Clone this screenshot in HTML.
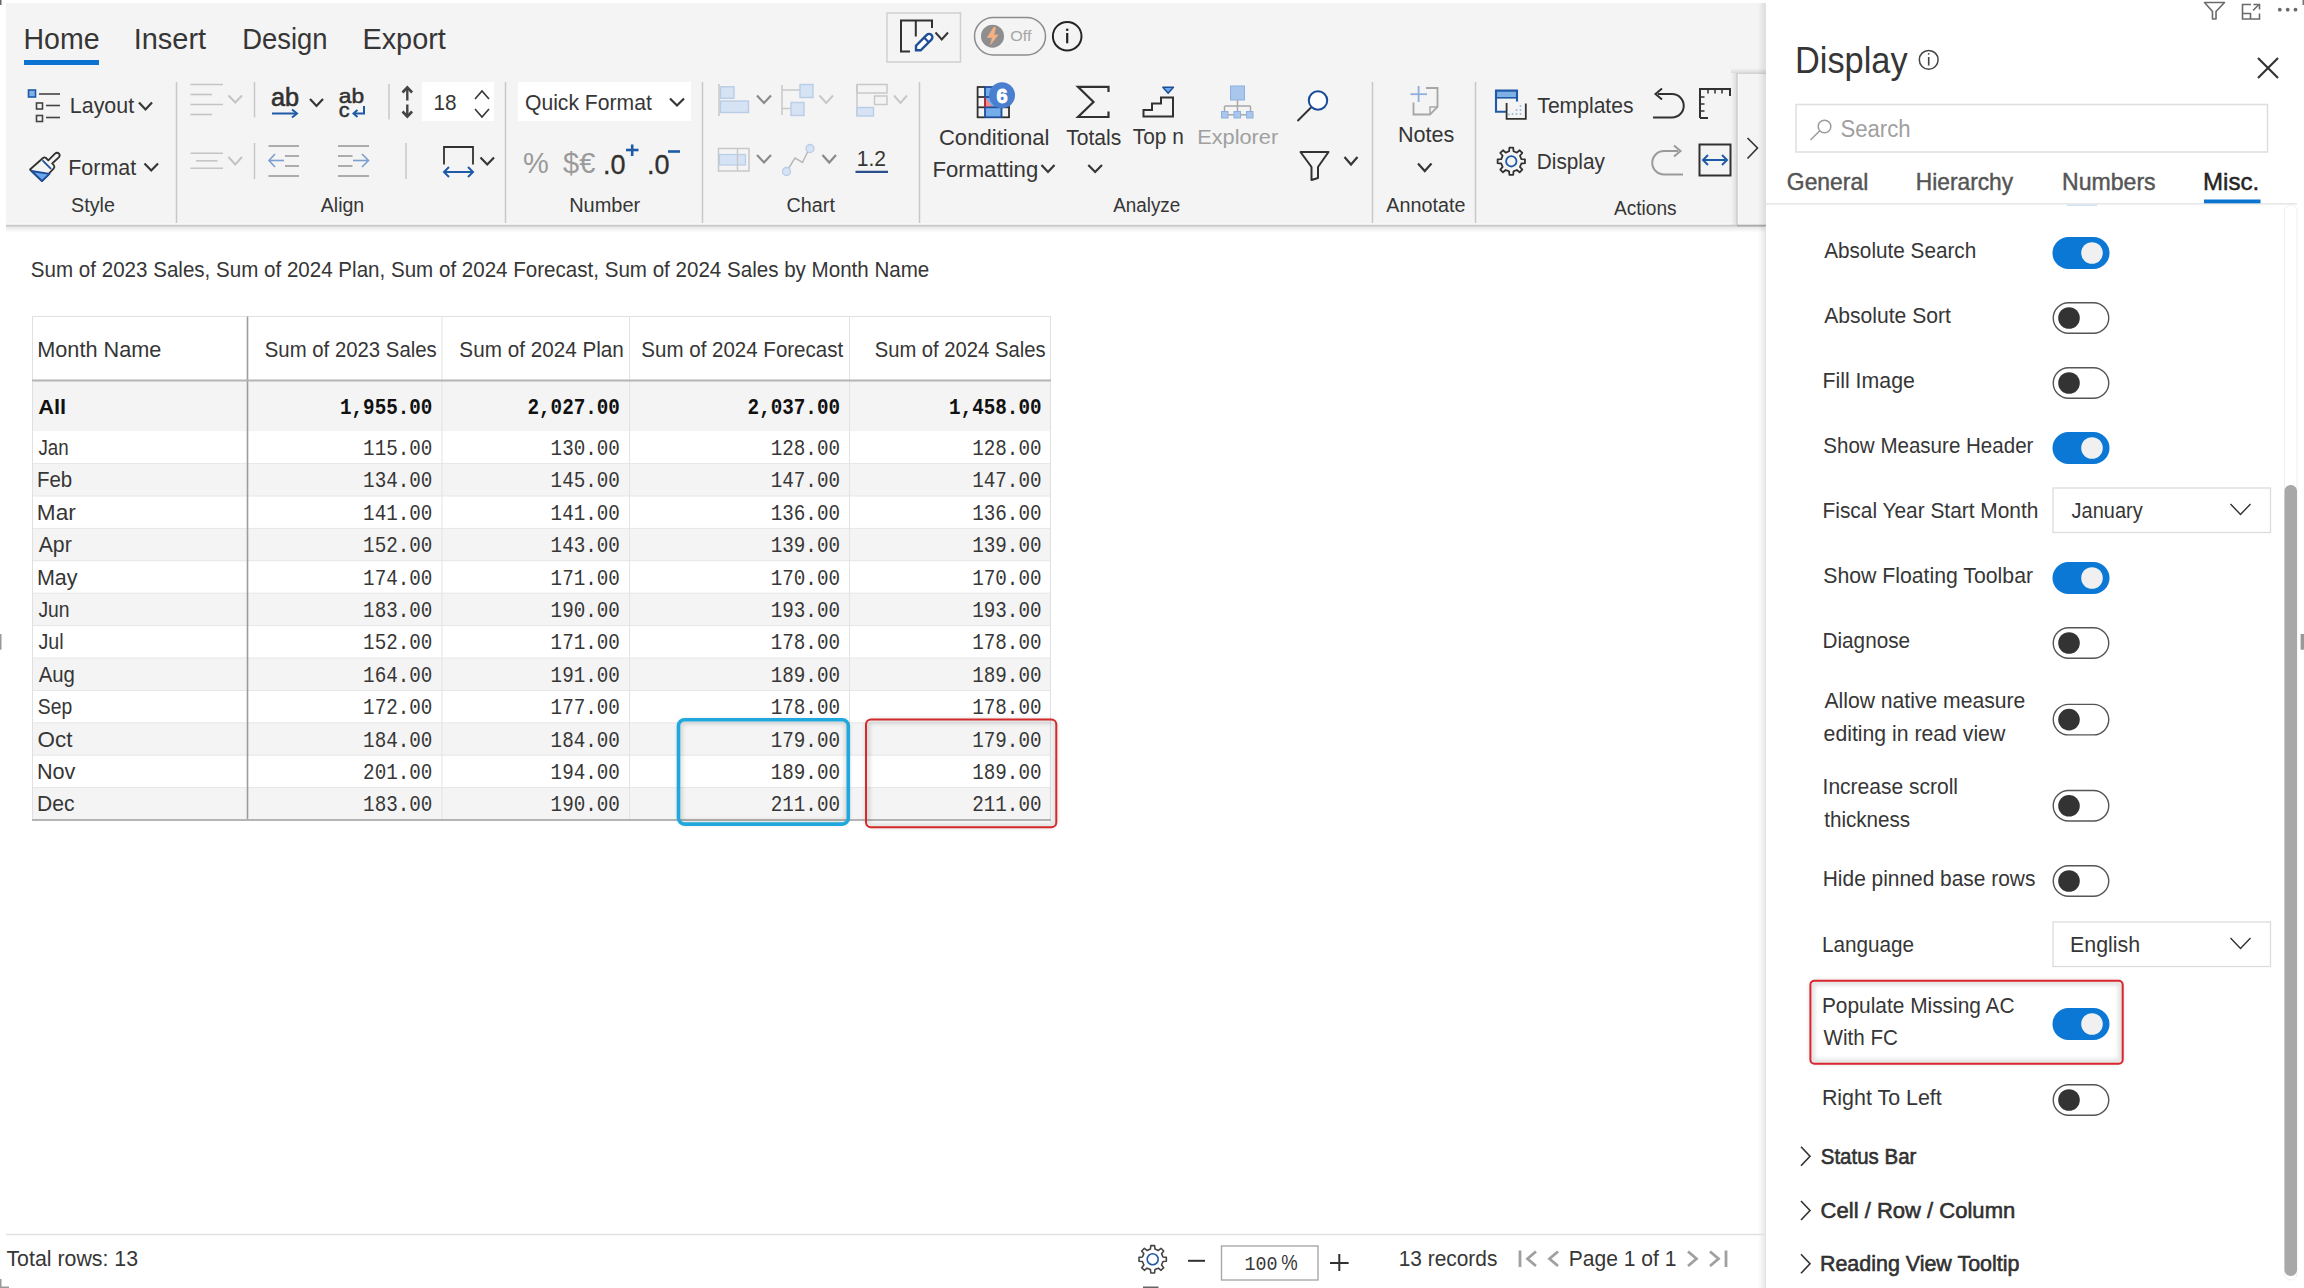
<!DOCTYPE html>
<html><head><meta charset="utf-8"><style>
html,body{margin:0;padding:0;background:#fff;width:2304px;height:1288px;overflow:hidden}
svg{position:absolute;left:0;top:0;display:block}
text{white-space:pre}
</style></head><body>
<svg width="2304" height="1288" viewBox="0 0 2304 1288"><defs><linearGradient id="shb" x1="0" y1="0" x2="0" y2="1"><stop offset="0" stop-color="#000" stop-opacity="0.10"/><stop offset="1" stop-color="#000" stop-opacity="0"/></linearGradient><linearGradient id="shl" x1="1" y1="0" x2="0" y2="0"><stop offset="0" stop-color="#000" stop-opacity="0.10"/><stop offset="1" stop-color="#000" stop-opacity="0"/></linearGradient><filter id="blr" x="-10%" y="-10%" width="120%" height="120%"><feGaussianBlur stdDeviation="2.2"/></filter></defs><rect x="6" y="3" width="1760" height="222" fill="#f4f4f4" stroke="none" stroke-width="1" rx="0" /><line x1="6" y1="224" x2="1766" y2="224" stroke="#fbfbfb" stroke-width="1" /><line x1="6" y1="225.6" x2="1766" y2="225.6" stroke="#c9c9c9" stroke-width="1.6" /><rect x="6" y="226.4" width="1760" height="6" fill="url(#shb)" stroke="none" stroke-width="1" rx="0" /><text x="23.46" y="49" font-size="29" fill="#363636" font-weight="normal" font-family='"Liberation Sans", sans-serif' text-anchor="start" textLength="76.11" lengthAdjust="spacingAndGlyphs" >Home</text><rect x="24" y="60" width="75" height="5" fill="#0a74d0" stroke="none" stroke-width="1" rx="0" /><text x="133.63" y="49" font-size="29" fill="#363636" font-weight="normal" font-family='"Liberation Sans", sans-serif' text-anchor="start" textLength="72.49" lengthAdjust="spacingAndGlyphs" >Insert</text><text x="242.25" y="49" font-size="29" fill="#363636" font-weight="normal" font-family='"Liberation Sans", sans-serif' text-anchor="start" textLength="85.33" lengthAdjust="spacingAndGlyphs" >Design</text><text x="362.43" y="49" font-size="29" fill="#363636" font-weight="normal" font-family='"Liberation Sans", sans-serif' text-anchor="start" textLength="83.38" lengthAdjust="spacingAndGlyphs" >Export</text><line x1="176.5" y1="82" x2="176.5" y2="223" stroke="#c8c8c8" stroke-width="1.5" /><line x1="505.5" y1="82" x2="505.5" y2="223" stroke="#c8c8c8" stroke-width="1.5" /><line x1="702.5" y1="82" x2="702.5" y2="223" stroke="#c8c8c8" stroke-width="1.5" /><line x1="919.5" y1="82" x2="919.5" y2="223" stroke="#c8c8c8" stroke-width="1.5" /><line x1="1372.5" y1="82" x2="1372.5" y2="223" stroke="#c8c8c8" stroke-width="1.5" /><line x1="1475.5" y1="82" x2="1475.5" y2="223" stroke="#c8c8c8" stroke-width="1.5" /><text x="71.11" y="211.5" font-size="19.5" fill="#363636" font-weight="normal" font-family='"Liberation Sans", sans-serif' text-anchor="start" textLength="43.77" lengthAdjust="spacingAndGlyphs" >Style</text><text x="320.76" y="211.5" font-size="19.5" fill="#363636" font-weight="normal" font-family='"Liberation Sans", sans-serif' text-anchor="start" textLength="43.51" lengthAdjust="spacingAndGlyphs" >Align</text><text x="569.16" y="211.5" font-size="19.5" fill="#363636" font-weight="normal" font-family='"Liberation Sans", sans-serif' text-anchor="start" textLength="70.97" lengthAdjust="spacingAndGlyphs" >Number</text><text x="786.60" y="211.5" font-size="19.5" fill="#363636" font-weight="normal" font-family='"Liberation Sans", sans-serif' text-anchor="start" textLength="48.35" lengthAdjust="spacingAndGlyphs" >Chart</text><text x="1113.16" y="211.5" font-size="19.5" fill="#363636" font-weight="normal" font-family='"Liberation Sans", sans-serif' text-anchor="start" textLength="67.07" lengthAdjust="spacingAndGlyphs" >Analyze</text><text x="1386.36" y="211.5" font-size="19.5" fill="#363636" font-weight="normal" font-family='"Liberation Sans", sans-serif' text-anchor="start" textLength="79.02" lengthAdjust="spacingAndGlyphs" >Annotate</text><text x="1613.96" y="214.5" font-size="19.5" fill="#363636" font-weight="normal" font-family='"Liberation Sans", sans-serif' text-anchor="start" textLength="62.73" lengthAdjust="spacingAndGlyphs" >Actions</text><rect x="1758" y="3" width="8" height="1288" fill="url(#shl)" stroke="none" stroke-width="1" rx="0" /><line x1="1765.5" y1="3" x2="1765.5" y2="1288" stroke="#e2e2e2" stroke-width="1" /><rect x="1766" y="0" width="538" height="1288" fill="#ffffff" stroke="none" stroke-width="1" rx="0" /><text x="30.87" y="276.5" font-size="22" fill="#363636" font-weight="normal" font-family='"Liberation Sans", sans-serif' text-anchor="start" textLength="898.45" lengthAdjust="spacingAndGlyphs" >Sum of 2023 Sales, Sum of 2024 Plan, Sum of 2024 Forecast, Sum of 2024 Sales by Month Name</text><rect x="28.5" y="90" width="7" height="7" fill="#7fb0e6" stroke="#1f5aa6" stroke-width="1.6" rx="0" /><line x1="39" y1="94" x2="60" y2="94" stroke="#444" stroke-width="1.6" /><rect x="36.5" y="103" width="6" height="6" fill="none" stroke="#444" stroke-width="1.6" rx="0" /><line x1="46" y1="105.5" x2="60" y2="105.5" stroke="#444" stroke-width="1.6" /><rect x="36.5" y="115.5" width="6" height="6" fill="none" stroke="#444" stroke-width="1.6" rx="0" /><line x1="46" y1="117.5" x2="60" y2="117.5" stroke="#444" stroke-width="1.6" /><text x="69.84" y="113" font-size="22" fill="#363636" font-weight="normal" font-family='"Liberation Sans", sans-serif' text-anchor="start" textLength="64.31" lengthAdjust="spacingAndGlyphs" >Layout</text><path d="M139 102.5 L145.5 109.5 L152 102.5" stroke="#363636" fill="none" stroke-width="2.2" stroke-linecap="butt" stroke-linejoin="miter"/><path d="M30 169.5 L43 158 Q44.5 156.8 46 158 L48.3 160.3 L55 153.6 Q57.2 151.8 59 153.6 Q60.5 155.5 58.8 157.3 L52.2 163.5 L53.8 165.2 Q55 166.8 53.8 168.3 L42 181 Z" stroke="#323130" fill="none" stroke-width="1.8" stroke-linejoin="round"/><path d="M31.5 171 L49.5 173.8 L42 181 Z" stroke="#1f4e99" fill="#6aa7ec" stroke-width="1.8" stroke-linejoin="round"/><line x1="42.5" y1="160.3" x2="51" y2="168.8" stroke="#1f4e99" stroke-width="1.8" /><text x="68.24" y="174.8" font-size="22" fill="#363636" font-weight="normal" font-family='"Liberation Sans", sans-serif' text-anchor="start" textLength="67.92" lengthAdjust="spacingAndGlyphs" >Format</text><path d="M144.5 163.5 L151.25 170.5 L158 163.5" stroke="#363636" fill="none" stroke-width="2.2" stroke-linecap="butt" stroke-linejoin="miter"/><line x1="190.5" y1="84.5" x2="223" y2="84.5" stroke="#c4c4c4" stroke-width="1.6" /><line x1="190.5" y1="94.5" x2="212" y2="94.5" stroke="#c4c4c4" stroke-width="1.6" /><line x1="190.5" y1="104.5" x2="223" y2="104.5" stroke="#c4c4c4" stroke-width="1.6" /><line x1="190.5" y1="114.5" x2="212" y2="114.5" stroke="#c4c4c4" stroke-width="1.6" /><path d="M228.5 95.5 L235.25 102.5 L242 95.5" stroke="#c4c4c4" fill="none" stroke-width="2" stroke-linecap="butt" stroke-linejoin="miter"/><line x1="254.5" y1="82" x2="254.5" y2="117.5" stroke="#c8c8c8" stroke-width="1.5" /><text x="270.93" y="106.4" font-size="25" fill="#323130" font-weight="normal" font-family='"Liberation Sans", sans-serif' text-anchor="start" textLength="28.14" lengthAdjust="spacingAndGlyphs" stroke="#323130" stroke-width="0.6">ab</text><line x1="272" y1="113.5" x2="296" y2="113.5" stroke="#1f5aa6" stroke-width="2" /><path d="M292 109.5 L297 113.5 L292 117.5" stroke="#1f5aa6" fill="none" stroke-width="2" /><path d="M310 99 L316.5 106 L323 99" stroke="#363636" fill="none" stroke-width="2.2" stroke-linecap="butt" stroke-linejoin="miter"/><text x="338.83" y="102.6" font-size="21" fill="#323130" font-weight="normal" font-family='"Liberation Sans", sans-serif' text-anchor="start" textLength="25.32" lengthAdjust="spacingAndGlyphs" stroke="#323130" stroke-width="0.5">ab</text><text x="338.88" y="117.2" font-size="21" fill="#323130" font-weight="normal" font-family='"Liberation Sans", sans-serif' text-anchor="start" textLength="10.79" lengthAdjust="spacingAndGlyphs" stroke="#323130" stroke-width="0.5">c</text><path d="M364 106 L364 113.5 L354 113.5" stroke="#1f5aa6" fill="none" stroke-width="2" /><path d="M357.5 110 L353.5 113.5 L357.5 117" stroke="#1f5aa6" fill="none" stroke-width="2" /><line x1="389" y1="84" x2="389" y2="119.5" stroke="#c8c8c8" stroke-width="1.5" /><line x1="407.3" y1="88.5" x2="407.3" y2="100.5" stroke="#444" stroke-width="2.4" /><line x1="407.3" y1="104.5" x2="407.3" y2="115.5" stroke="#444" stroke-width="2.4" /><path d="M402.5 92.5 L407.3 87.5 L412.1 92.5" stroke="#444" fill="none" stroke-width="2.6" /><path d="M402.5 111.5 L407.3 116.5 L412.1 111.5" stroke="#444" fill="none" stroke-width="2.6" /><rect x="422" y="82" width="72" height="39" fill="#ffffff" stroke="none" stroke-width="1" rx="0" /><text x="433.42" y="110" font-size="22" fill="#363636" font-weight="normal" font-family='"Liberation Sans", sans-serif' text-anchor="start" textLength="23.08" lengthAdjust="spacingAndGlyphs" >18</text><path d="M475 99 L482.0 91 L489 99" stroke="#363636" fill="none" stroke-width="1.6" stroke-linecap="butt" stroke-linejoin="miter"/><path d="M475 109 L482.0 117 L489 109" stroke="#363636" fill="none" stroke-width="1.6" stroke-linecap="butt" stroke-linejoin="miter"/><line x1="190.5" y1="153.3" x2="223" y2="153.3" stroke="#c4c4c4" stroke-width="1.6" /><line x1="196" y1="160.8" x2="217.5" y2="160.8" stroke="#c4c4c4" stroke-width="1.6" /><line x1="190.5" y1="168.3" x2="223" y2="168.3" stroke="#c4c4c4" stroke-width="1.6" /><path d="M228.5 157 L235.25 164.5 L242 157" stroke="#c4c4c4" fill="none" stroke-width="2" stroke-linecap="butt" stroke-linejoin="miter"/><line x1="254.5" y1="143" x2="254.5" y2="179" stroke="#c8c8c8" stroke-width="1.5" /><line x1="268.5" y1="146" x2="299" y2="146" stroke="#9a9a9a" stroke-width="1.6" /><line x1="285" y1="156" x2="299" y2="156" stroke="#9a9a9a" stroke-width="1.6" /><line x1="285" y1="166" x2="299" y2="166" stroke="#9a9a9a" stroke-width="1.6" /><line x1="268.5" y1="176" x2="299" y2="176" stroke="#9a9a9a" stroke-width="1.6" /><line x1="269" y1="160.5" x2="284" y2="160.5" stroke="#7b9fcf" stroke-width="1.6" /><path d="M275 154 L269 160.5 L275 167" stroke="#7b9fcf" fill="none" stroke-width="1.6" /><line x1="338" y1="146" x2="369" y2="146" stroke="#9a9a9a" stroke-width="1.6" /><line x1="338" y1="156" x2="352.5" y2="156" stroke="#9a9a9a" stroke-width="1.6" /><line x1="338" y1="166" x2="352.5" y2="166" stroke="#9a9a9a" stroke-width="1.6" /><line x1="338" y1="176" x2="369" y2="176" stroke="#9a9a9a" stroke-width="1.6" /><line x1="353" y1="160.5" x2="368" y2="160.5" stroke="#7b9fcf" stroke-width="1.6" /><path d="M362 154 L368.5 160.5 L362 167" stroke="#7b9fcf" fill="none" stroke-width="1.6" /><line x1="406" y1="143" x2="406" y2="179" stroke="#c8c8c8" stroke-width="1.5" /><path d="M444 164.5 L444 147 L473 147 L473 164.5" stroke="#323130" fill="none" stroke-width="1.8" /><line x1="444" y1="172" x2="473" y2="172" stroke="#1f5aa6" stroke-width="2" /><path d="M449 167 L444 172 L449 177" stroke="#1f5aa6" fill="none" stroke-width="2" /><path d="M468 167 L473 172 L468 177" stroke="#1f5aa6" fill="none" stroke-width="2" /><path d="M480.5 157.5 L487.25 164.5 L494 157.5" stroke="#363636" fill="none" stroke-width="2.2" stroke-linecap="butt" stroke-linejoin="miter"/><rect x="518" y="82" width="173" height="39" fill="#ffffff" stroke="none" stroke-width="1" rx="0" /><text x="525.00" y="110" font-size="22" fill="#363636" font-weight="normal" font-family='"Liberation Sans", sans-serif' text-anchor="start" textLength="126.76" lengthAdjust="spacingAndGlyphs" >Quick Format</text><path d="M670 98.5 L677.0 105.5 L684 98.5" stroke="#363636" fill="none" stroke-width="2.2" stroke-linecap="butt" stroke-linejoin="miter"/><text x="523.00" y="172.5" font-size="29" fill="#9a9a9a" font-weight="normal" font-family='"Liberation Sans", sans-serif' text-anchor="start" >%</text><text x="563.00" y="172.5" font-size="29" fill="#9a9a9a" font-weight="normal" font-family='"Liberation Sans", sans-serif' text-anchor="start" >$€</text><text x="603.00" y="174" font-size="27" fill="#323130" font-weight="normal" font-family='"Liberation Sans", sans-serif' text-anchor="start" stroke="#323130" stroke-width="0.3">.0</text><line x1="626" y1="150" x2="638.5" y2="150" stroke="#1f5aa6" stroke-width="2.6" /><line x1="632.2" y1="144.5" x2="632.2" y2="156" stroke="#1f5aa6" stroke-width="2.6" /><text x="647.00" y="174" font-size="27" fill="#323130" font-weight="normal" font-family='"Liberation Sans", sans-serif' text-anchor="start" stroke="#323130" stroke-width="0.3">.0</text><line x1="668" y1="151.5" x2="680" y2="151.5" stroke="#1f5aa6" stroke-width="2.6" /><line x1="719" y1="84" x2="719" y2="116" stroke="#c8c8c8" stroke-width="1.5" /><rect x="720.5" y="86.8" width="13.5" height="11.5" fill="#d5e3f4" stroke="#b9cde6" stroke-width="1.4" rx="0" /><rect x="720.5" y="101" width="28" height="11.5" fill="#d5e3f4" stroke="#b9cde6" stroke-width="1.4" rx="0" /><path d="M757 95.5 L764.0 103 L771 95.5" stroke="#8a8a8a" fill="none" stroke-width="2.2" stroke-linecap="butt" stroke-linejoin="miter"/><line x1="782" y1="85" x2="782" y2="115" stroke="#c8c8c8" stroke-width="1.5" /><line x1="782" y1="90" x2="800" y2="90" stroke="#c8c8c8" stroke-width="1.5" /><line x1="782" y1="108.5" x2="791" y2="108.5" stroke="#c8c8c8" stroke-width="1.5" /><rect x="800" y="84.5" width="13" height="13" fill="#d5e3f4" stroke="#b9cde6" stroke-width="1.4" rx="0" /><rect x="791" y="102.5" width="13" height="13" fill="#d5e3f4" stroke="#b9cde6" stroke-width="1.4" rx="0" /><path d="M819.5 95.5 L826.25 103 L833 95.5" stroke="#c8c8c8" fill="none" stroke-width="2" stroke-linecap="butt" stroke-linejoin="miter"/><rect x="857" y="84.5" width="30" height="8.5" fill="none" stroke="#c8c8c8" stroke-width="1.5" rx="0" /><rect x="874.5" y="96" width="12.5" height="8.5" fill="none" stroke="#c8c8c8" stroke-width="1.5" rx="0" /><line x1="857" y1="84.5" x2="857" y2="116" stroke="#c8c8c8" stroke-width="1.5" /><rect x="857" y="107.5" width="16.5" height="8.5" fill="#d5e3f4" stroke="#b9cde6" stroke-width="1.4" rx="0" /><path d="M894 95.5 L900.5 103 L907 95.5" stroke="#c8c8c8" fill="none" stroke-width="2" stroke-linecap="butt" stroke-linejoin="miter"/><rect x="718.5" y="148.5" width="30.5" height="22.5" fill="none" stroke="#c8c8c8" stroke-width="1.5" rx="0" /><rect x="719.5" y="154.5" width="26" height="10.5" fill="#d5e3f4" stroke="#b9cde6" stroke-width="1.2" rx="0" /><line x1="737.5" y1="148.5" x2="737.5" y2="171" stroke="#c8c8c8" stroke-width="1.5" /><path d="M757 155 L764.0 162.5 L771 155" stroke="#8a8a8a" fill="none" stroke-width="2.2" stroke-linecap="butt" stroke-linejoin="miter"/><path d="M786.5 171.5 L795 158 L802.5 162.5 L809 149" stroke="#b8b8b8" fill="none" stroke-width="1.5" /><circle cx="786.5" cy="171.5" r="4" fill="#d5e3f4" stroke="#b9cde6" stroke-width="1.3"/><circle cx="810" cy="148.5" r="4" fill="#d5e3f4" stroke="#b9cde6" stroke-width="1.3"/><path d="M822.5 155 L829.25 162.5 L836 155" stroke="#8a8a8a" fill="none" stroke-width="2.2" stroke-linecap="butt" stroke-linejoin="miter"/><text x="856.80" y="165.6" font-size="22" fill="#363636" font-weight="normal" font-family='"Liberation Sans", sans-serif' text-anchor="start" textLength="29.26" lengthAdjust="spacingAndGlyphs" >1.2</text><line x1="855.5" y1="171.8" x2="888" y2="171.8" stroke="#2b4f8a" stroke-width="2.2" /><rect x="985" y="87" width="16.5" height="30.5" fill="#74aeea" stroke="none" stroke-width="1" rx="0" /><path d="M985 97.5 L985 107.3 L993 107.3 Z" stroke="none" fill="#f58a8a" stroke-width="1" /><line x1="977.6" y1="86.5" x2="977.6" y2="118" stroke="#323130" stroke-width="1.8" /><line x1="1009" y1="86.5" x2="1009" y2="118" stroke="#323130" stroke-width="1.8" /><line x1="977" y1="87" x2="985" y2="87" stroke="#323130" stroke-width="1.8" /><line x1="977" y1="97" x2="985" y2="97" stroke="#323130" stroke-width="1.8" /><line x1="977" y1="107.3" x2="985" y2="107.3" stroke="#323130" stroke-width="1.8" /><line x1="977" y1="117.3" x2="985" y2="117.3" stroke="#323130" stroke-width="1.8" /><line x1="1001.5" y1="107.3" x2="1009.5" y2="107.3" stroke="#323130" stroke-width="1.8" /><line x1="1001.5" y1="117.3" x2="1009.5" y2="117.3" stroke="#323130" stroke-width="1.8" /><line x1="985" y1="87" x2="1001.5" y2="87" stroke="#1f4e99" stroke-width="1.8" /><line x1="985" y1="97" x2="1001.5" y2="97" stroke="#1f4e99" stroke-width="1.8" /><line x1="985" y1="107.3" x2="1001.5" y2="107.3" stroke="#1f4e99" stroke-width="1.8" /><line x1="985" y1="117.3" x2="1001.5" y2="117.3" stroke="#1f4e99" stroke-width="1.8" /><line x1="985" y1="86.5" x2="985" y2="118" stroke="#1f4e99" stroke-width="1.8" /><line x1="1001.5" y1="86.5" x2="1001.5" y2="118" stroke="#1f4e99" stroke-width="1.8" /><line x1="985" y1="97.5" x2="985" y2="107" stroke="#c0282d" stroke-width="1.8" /><circle cx="1002" cy="95.3" r="13" fill="#4a7fcf" stroke="none" stroke-width="1"/><text x="1002.00" y="102.8" font-size="20" fill="#ffffff" font-weight="bold" font-family='"Liberation Sans", sans-serif' text-anchor="middle" stroke="#ffffff" stroke-width="0.9">6</text><text x="938.88" y="144.5" font-size="22" fill="#363636" font-weight="normal" font-family='"Liberation Sans", sans-serif' text-anchor="start" textLength="110.60" lengthAdjust="spacingAndGlyphs" >Conditional</text><text x="932.49" y="176.6" font-size="22" fill="#363636" font-weight="normal" font-family='"Liberation Sans", sans-serif' text-anchor="start" textLength="105.74" lengthAdjust="spacingAndGlyphs" >Formatting</text><path d="M1041.5 165 L1048.0 172 L1054.5 165" stroke="#363636" fill="none" stroke-width="2.2" stroke-linecap="butt" stroke-linejoin="miter"/><path d="M1108.5 92 L1108.5 86.8 L1078 86.8 L1093.5 102 L1078 117 L1108.5 117 L1108.5 111.5" stroke="#323130" fill="none" stroke-width="2.2" stroke-linejoin="miter"/><text x="1066.14" y="144.5" font-size="22" fill="#363636" font-weight="normal" font-family='"Liberation Sans", sans-serif' text-anchor="start" textLength="55.19" lengthAdjust="spacingAndGlyphs" >Totals</text><path d="M1088.3 165 L1095.15 172 L1102 165" stroke="#363636" fill="none" stroke-width="2.2" stroke-linecap="butt" stroke-linejoin="miter"/><path d="M1162.8 87.3 L1173.5 87.3 L1168.15 93.3 Z" stroke="#1f4e99" fill="#6aa7ec" stroke-width="1.4" stroke-linejoin="round"/><path d="M1143.5 116.5 L1143.5 110 L1152 110 L1152 103.5 L1161 103.5 L1161 97.5 L1173 97.5 L1173 116.5 Z" stroke="#323130" fill="none" stroke-width="2" /><text x="1132.85" y="144.2" font-size="22" fill="#363636" font-weight="normal" font-family='"Liberation Sans", sans-serif' text-anchor="start" textLength="50.94" lengthAdjust="spacingAndGlyphs" >Top n</text><rect x="1230.5" y="86" width="14" height="14" fill="#a9c6ec" stroke="#8cb0e0" stroke-width="1" rx="0" /><line x1="1237.5" y1="100" x2="1237.5" y2="106" stroke="#a8a8a8" stroke-width="1.5" /><line x1="1224.5" y1="106" x2="1250.5" y2="106" stroke="#a8a8a8" stroke-width="1.5" /><line x1="1224.5" y1="106" x2="1224.5" y2="111" stroke="#a8a8a8" stroke-width="1.5" /><line x1="1237.5" y1="106" x2="1237.5" y2="111" stroke="#a8a8a8" stroke-width="1.5" /><line x1="1250.5" y1="106" x2="1250.5" y2="111" stroke="#a8a8a8" stroke-width="1.5" /><line x1="1224" y1="114.8" x2="1250" y2="114.8" stroke="#a8a8a8" stroke-width="1.5" /><rect x="1221.5" y="111.5" width="6.5" height="6.5" fill="#a9c6ec" stroke="#8cb0e0" stroke-width="1" rx="0" /><rect x="1234" y="111.5" width="6.5" height="6.5" fill="#a9c6ec" stroke="#8cb0e0" stroke-width="1" rx="0" /><rect x="1246.5" y="111.5" width="6.5" height="6.5" fill="#a9c6ec" stroke="#8cb0e0" stroke-width="1" rx="0" /><text x="1197.22" y="144" font-size="21" fill="#a0a0a0" font-weight="normal" font-family='"Liberation Sans", sans-serif' text-anchor="start" textLength="80.94" lengthAdjust="spacingAndGlyphs" >Explorer</text><circle cx="1318" cy="100.5" r="9.2" fill="#ffffff" stroke="#1a4a9a" stroke-width="2"/><line x1="1297.5" y1="121" x2="1311" y2="107.5" stroke="#323130" stroke-width="2" /><path d="M1300.5 152 L1328.5 152 L1318 167 L1318 178 L1311.5 180 L1311.5 167 Z" stroke="#323130" fill="none" stroke-width="2" stroke-linejoin="round"/><path d="M1344.5 157 L1351.0 164.5 L1357.5 157" stroke="#363636" fill="none" stroke-width="2.2" stroke-linecap="butt" stroke-linejoin="miter"/><path d="M1413.5 102.5 L1413.5 114.5 L1430 114.5 L1437.5 107 L1437.5 88 L1426 88" stroke="#a6a6a6" fill="none" stroke-width="1.8" /><path d="M1430 114.5 L1430 107 L1437.5 107" stroke="#a6a6a6" fill="none" stroke-width="1.5" /><line x1="1410.5" y1="94.2" x2="1427" y2="94.2" stroke="#8eaedb" stroke-width="1.8" /><line x1="1418.6" y1="86" x2="1418.6" y2="102" stroke="#8eaedb" stroke-width="1.8" /><text x="1397.93" y="142" font-size="22" fill="#363636" font-weight="normal" font-family='"Liberation Sans", sans-serif' text-anchor="start" textLength="56.45" lengthAdjust="spacingAndGlyphs" >Notes</text><path d="M1418 163.5 L1424.75 171 L1431.5 163.5" stroke="#363636" fill="none" stroke-width="2.2" stroke-linecap="butt" stroke-linejoin="miter"/><rect x="1496.8" y="91.2" width="19.8" height="6.3" fill="#7fb0e6" stroke="none" stroke-width="1" rx="0" /><path d="M1517 101.5 L1517 90.6 L1496 90.6 L1496 111.8 L1506 111.8" stroke="#1f5aa6" fill="none" stroke-width="2.1" /><line x1="1496" y1="97.8" x2="1517" y2="97.8" stroke="#1f5aa6" stroke-width="1.6" /><path d="M1506.6 103 L1506.6 118.8 L1525.8 118.8 L1525.8 103.5" stroke="#323130" fill="none" stroke-width="1.8" /><rect x="1519.7" y="105.2" width="1.6" height="1.6" fill="#8fb0da" stroke="none" stroke-width="1" rx="0" /><rect x="1519.7" y="109.2" width="1.6" height="1.6" fill="#8fb0da" stroke="none" stroke-width="1" rx="0" /><rect x="1515.7" y="109.2" width="1.6" height="1.6" fill="#8fb0da" stroke="none" stroke-width="1" rx="0" /><rect x="1519.7" y="113.2" width="1.6" height="1.6" fill="#8fb0da" stroke="none" stroke-width="1" rx="0" /><rect x="1515.7" y="113.2" width="1.6" height="1.6" fill="#8fb0da" stroke="none" stroke-width="1" rx="0" /><rect x="1511.7" y="113.2" width="1.6" height="1.6" fill="#8fb0da" stroke="none" stroke-width="1" rx="0" /><rect x="1508.2" y="113.7" width="1.6" height="1.6" fill="#8fb0da" stroke="none" stroke-width="1" rx="0" /><text x="1537.34" y="113.1" font-size="22" fill="#363636" font-weight="normal" font-family='"Liberation Sans", sans-serif' text-anchor="start" textLength="96.21" lengthAdjust="spacingAndGlyphs" >Templates</text><path d="M1683 88.6 L1683 88.6" stroke="none" fill="none" stroke-width="1" /><path d="M1658 94 L1672 94 A11.7 11.7 0 0 1 1672 117.5 L1653 117.5" stroke="#323130" fill="none" stroke-width="2" /><path d="M1662 88.5 L1655.5 94 L1662 99.5" stroke="#323130" fill="none" stroke-width="2" /><path d="M1700 118 L1700 89 L1730 89 L1730 96" stroke="#323130" fill="none" stroke-width="2" /><line x1="1708" y1="89" x2="1708" y2="93.5" stroke="#323130" stroke-width="1.5" /><line x1="1715" y1="89" x2="1715" y2="93.5" stroke="#323130" stroke-width="1.5" /><line x1="1722" y1="89" x2="1722" y2="93.5" stroke="#323130" stroke-width="1.5" /><line x1="1700" y1="97" x2="1704.5" y2="97" stroke="#323130" stroke-width="1.5" /><line x1="1700" y1="104" x2="1704.5" y2="104" stroke="#323130" stroke-width="1.5" /><line x1="1700" y1="111" x2="1704.5" y2="111" stroke="#323130" stroke-width="1.5" /><line x1="1700" y1="118" x2="1708" y2="118" stroke="#323130" stroke-width="2" /><path d="M1521.36 159.09 L1524.97 159.41 L1524.97 163.19 L1521.36 163.51 L1519.97 166.85 L1522.30 169.63 L1519.63 172.30 L1516.85 169.97 L1513.51 171.36 L1513.19 174.97 L1509.41 174.97 L1509.09 171.36 L1505.75 169.97 L1502.97 172.30 L1500.30 169.63 L1502.63 166.85 L1501.24 163.51 L1497.63 163.19 L1497.63 159.41 L1501.24 159.09 L1502.63 155.75 L1500.30 152.97 L1502.97 150.30 L1505.75 152.63 L1509.09 151.24 L1509.41 147.63 L1513.19 147.63 L1513.51 151.24 L1516.85 152.63 L1519.63 150.30 L1522.30 152.97 L1519.97 155.75 Z" stroke="#323130" fill="none" stroke-width="1.8" stroke-linejoin="round"/><circle cx="1511.3" cy="161.3" r="5.2" fill="none" stroke="#1f5aa6" stroke-width="1.8"/><text x="1536.80" y="169" font-size="22" fill="#363636" font-weight="normal" font-family='"Liberation Sans", sans-serif' text-anchor="start" textLength="68.15" lengthAdjust="spacingAndGlyphs" >Display</text><path d="M1678 151 L1664 151 A11.7 11.7 0 0 0 1664 174.5 L1683 174.5" stroke="#9a9a9a" fill="none" stroke-width="2" /><path d="M1674 145.5 L1680.5 151 L1674 156.5" stroke="#9a9a9a" fill="none" stroke-width="2" /><rect x="1699.5" y="144.5" width="31" height="31" fill="none" stroke="#323130" stroke-width="2" rx="0" /><line x1="1703" y1="160" x2="1727" y2="160" stroke="#1f5aa6" stroke-width="2" /><path d="M1708 155 L1703 160 L1708 165" stroke="#1f5aa6" fill="none" stroke-width="2" /><path d="M1722 155 L1727 160 L1722 165" stroke="#1f5aa6" fill="none" stroke-width="2" /><rect x="1731" y="73" width="6" height="152" fill="url(#shl)" stroke="none" stroke-width="1" rx="0" /><rect x="1737" y="73" width="29" height="152" fill="#f4f4f4" stroke="none" stroke-width="1" rx="0" /><line x1="1737" y1="73" x2="1737" y2="225" stroke="#cfcfcf" stroke-width="1.6" /><line x1="1738.5" y1="74" x2="1738.5" y2="223" stroke="#f8f8f8" stroke-width="1" /><line x1="1737" y1="225.6" x2="1766" y2="225.6" stroke="#ababab" stroke-width="1.8" /><rect x="1731" y="68" width="35" height="5" fill="url(#shb)" stroke="none" stroke-width="1" rx="0" transform="rotate(180 1748.5 70.5)"/><line x1="1736" y1="73.3" x2="1766" y2="73.3" stroke="#d0d0d0" stroke-width="1.2" /><rect x="1758" y="73" width="8" height="153" fill="url(#shl)" stroke="none" stroke-width="1" rx="0" /><path d="M1747.5 138 L1757.5 148 L1747.5 158.5" stroke="#323130" fill="none" stroke-width="1.6" /><rect x="887" y="13" width="73.5" height="49" fill="none" stroke="#cfcfcf" stroke-width="1.5" rx="0" /><path d="M910 51.5 L901 51.5 L901 20.5 L932 20.5 L932 28" stroke="#323130" fill="none" stroke-width="2" /><line x1="915.8" y1="20.5" x2="915.8" y2="36.5" stroke="#323130" stroke-width="2" /><g transform="translate(918.2 48.1) rotate(-45)"><path d="M-3.1 0 L0.2 -3.3 L15.4 -3.3 A3.3 3.3 0 0 1 15.4 3.3 L0.2 3.3 Z" fill="#ffffff" stroke="#1f4e99" stroke-width="2.4" stroke-linejoin="miter"/><line x1="11.6" y1="-3.3" x2="11.6" y2="3.3" stroke="#1f4e99" stroke-width="2.2"/></g><path d="M935.5 32.5 L941.75 39.5 L948 32.5" stroke="#363636" fill="none" stroke-width="2" stroke-linecap="butt" stroke-linejoin="miter"/><rect x="974.5" y="17.5" width="71" height="37.5" fill="none" stroke="#8c8c8c" stroke-width="1.5" rx="18.75" /><circle cx="992.5" cy="36.2" r="11.5" fill="#8e8e8e" stroke="none" stroke-width="1"/><path d="M993.6 27.6 L995.6 27.6 L993.9 34.9 L997.9 34.9 L990.6 44.6 L992.3 37.5 L987.4 37.5 Z" stroke="#f6b183" fill="#f6b183" stroke-width="0.6" stroke-linejoin="round"/><text x="1010.25" y="41" font-size="15" fill="#a6a6a6" font-weight="normal" font-family='"Liberation Sans", sans-serif' text-anchor="start" textLength="21.23" lengthAdjust="spacingAndGlyphs" >Off</text><circle cx="1067.2" cy="36.2" r="14.3" fill="none" stroke="#252423" stroke-width="2"/><line x1="1067.2" y1="33" x2="1067.2" y2="43.3" stroke="#252423" stroke-width="2.2" /><circle cx="1067.2" cy="29.8" r="1.3" fill="#252423" stroke="none" stroke-width="1"/><path d="M2204.5 2.5 L2224.5 2.5 L2216 11.5 L2216 19 L2212.5 19 L2212.5 11.5 Z" stroke="#6a6a6a" fill="none" stroke-width="1.6" stroke-linejoin="round"/><path d="M2251 4.5 L2242.5 4.5 L2242.5 19 L2259.5 19 L2259.5 13.5" stroke="#6a6a6a" fill="none" stroke-width="1.6" /><path d="M2242.5 13.5 L2250.5 13.5 L2250.5 19" stroke="#6a6a6a" fill="none" stroke-width="1.6" /><path d="M2253.5 4.5 L2259.5 4.5 L2259.5 9.5" stroke="#6a6a6a" fill="none" stroke-width="1.6" /><line x1="2253" y1="10.5" x2="2259" y2="4.5" stroke="#6a6a6a" stroke-width="1.6" /><circle cx="2279.8" cy="9.7" r="1.9" fill="#6a6a6a" stroke="none" stroke-width="1"/><circle cx="2287.7" cy="9.7" r="1.9" fill="#6a6a6a" stroke="none" stroke-width="1"/><circle cx="2295.5" cy="9.7" r="1.9" fill="#6a6a6a" stroke="none" stroke-width="1"/><rect x="2302.5" y="0" width="1.5" height="5" fill="#777" stroke="none" stroke-width="1" rx="0" /><text x="1794.98" y="73" font-size="36.5" fill="#363636" font-weight="normal" font-family='"Liberation Sans", sans-serif' text-anchor="start" textLength="112.69" lengthAdjust="spacingAndGlyphs" >Display</text><circle cx="1928.7" cy="59.8" r="9.4" fill="none" stroke="#444" stroke-width="1.5"/><line x1="1928.7" y1="57" x2="1928.7" y2="65.5" stroke="#444" stroke-width="1.6" /><circle cx="1928.7" cy="53.8" r="0.9" fill="#444" stroke="none" stroke-width="1"/><line x1="2258" y1="58" x2="2278" y2="78" stroke="#323130" stroke-width="2.2" /><line x1="2278" y1="58" x2="2258" y2="78" stroke="#323130" stroke-width="2.2" /><rect x="1796" y="104.5" width="471.5" height="47.5" fill="#fff" stroke="#dedede" stroke-width="1.5" rx="0" /><circle cx="1824.5" cy="126.5" r="6.3" fill="none" stroke="#9a9a9a" stroke-width="1.5"/><line x1="1810.5" y1="140" x2="1820" y2="130.5" stroke="#9a9a9a" stroke-width="1.5" /><text x="1840.49" y="137.4" font-size="23" fill="#a0a0a0" font-weight="normal" font-family='"Liberation Sans", sans-serif' text-anchor="start" textLength="70.14" lengthAdjust="spacingAndGlyphs" >Search</text><text x="1786.85" y="190" font-size="24" fill="#555555" font-weight="normal" font-family='"Liberation Sans", sans-serif' text-anchor="start" textLength="81.38" lengthAdjust="spacingAndGlyphs" stroke="#555" stroke-width="0.45">General</text><text x="1915.83" y="190" font-size="24" fill="#555555" font-weight="normal" font-family='"Liberation Sans", sans-serif' text-anchor="start" textLength="97.31" lengthAdjust="spacingAndGlyphs" stroke="#555" stroke-width="0.45">Hierarchy</text><text x="2062.11" y="190" font-size="24" fill="#555555" font-weight="normal" font-family='"Liberation Sans", sans-serif' text-anchor="start" textLength="93.52" lengthAdjust="spacingAndGlyphs" stroke="#555" stroke-width="0.45">Numbers</text><text x="2203.02" y="190" font-size="24" fill="#252423" font-weight="normal" font-family='"Liberation Sans", sans-serif' text-anchor="start" textLength="56.17" lengthAdjust="spacingAndGlyphs" stroke="#252423" stroke-width="0.45">Misc.</text><line x1="1766" y1="203.8" x2="2297" y2="203.8" stroke="#e1e1e1" stroke-width="1.2" /><rect x="2204" y="199.5" width="56.5" height="3.8" fill="#0a74d0" stroke="none" stroke-width="1" rx="0" /><rect x="2067" y="204.5" width="30" height="1.5" fill="#cfe0f3" stroke="none" stroke-width="1" rx="0" /><rect x="2284.5" y="205" width="12.5" height="1075" fill="none" stroke="#efefef" stroke-width="1" rx="6" /><rect x="2284.5" y="485" width="12.5" height="791" fill="#a8a8a8" stroke="none" stroke-width="1" rx="6" /><text x="1824.16" y="257.8" font-size="22" fill="#363636" font-weight="normal" font-family='"Liberation Sans", sans-serif' text-anchor="start" textLength="152.09" lengthAdjust="spacingAndGlyphs" >Absolute Search</text><rect x="2052.5" y="237" width="57" height="32" fill="#0a78d4" stroke="none" stroke-width="1" rx="16" /><circle cx="2092" cy="253" r="10.8" fill="#f0f0f0" stroke="none" stroke-width="1"/><text x="1824.16" y="322.8" font-size="22" fill="#363636" font-weight="normal" font-family='"Liberation Sans", sans-serif' text-anchor="start" textLength="126.80" lengthAdjust="spacingAndGlyphs" >Absolute Sort</text><rect x="2053.25" y="302.75" width="55.5" height="30.5" fill="#fff" stroke="#555555" stroke-width="1.4" rx="15.25" /><circle cx="2069" cy="318" r="10.8" fill="#333333" stroke="none" stroke-width="1"/><text x="1822.45" y="387.8" font-size="22" fill="#363636" font-weight="normal" font-family='"Liberation Sans", sans-serif' text-anchor="start" textLength="92.40" lengthAdjust="spacingAndGlyphs" >Fill Image</text><rect x="2053.25" y="367.75" width="55.5" height="30.5" fill="#fff" stroke="#555555" stroke-width="1.4" rx="15.25" /><circle cx="2069" cy="383" r="10.8" fill="#333333" stroke="none" stroke-width="1"/><text x="1823.27" y="452.8" font-size="22" fill="#363636" font-weight="normal" font-family='"Liberation Sans", sans-serif' text-anchor="start" textLength="210.17" lengthAdjust="spacingAndGlyphs" >Show Measure Header</text><rect x="2052.5" y="432" width="57" height="32" fill="#0a78d4" stroke="none" stroke-width="1" rx="16" /><circle cx="2092" cy="448" r="10.8" fill="#f0f0f0" stroke="none" stroke-width="1"/><text x="1822.51" y="517.5" font-size="22" fill="#363636" font-weight="normal" font-family='"Liberation Sans", sans-serif' text-anchor="start" textLength="215.84" lengthAdjust="spacingAndGlyphs" >Fiscal Year Start Month</text><rect x="2053" y="488" width="217.5" height="44.5" fill="#fff" stroke="#dcdcdc" stroke-width="1.3" rx="0" /><text x="2071.59" y="518" font-size="22" fill="#363636" font-weight="normal" font-family='"Liberation Sans", sans-serif' text-anchor="start" textLength="71.05" lengthAdjust="spacingAndGlyphs" >January</text><path d="M2230.5 504 L2240.5 514.5 L2250.5 504" stroke="#323130" fill="none" stroke-width="1.4" /><text x="1823.25" y="582.8" font-size="22" fill="#363636" font-weight="normal" font-family='"Liberation Sans", sans-serif' text-anchor="start" textLength="209.80" lengthAdjust="spacingAndGlyphs" >Show Floating Toolbar</text><rect x="2052.5" y="562" width="57" height="32" fill="#0a78d4" stroke="none" stroke-width="1" rx="16" /><circle cx="2092" cy="578" r="10.8" fill="#f0f0f0" stroke="none" stroke-width="1"/><text x="1822.50" y="647.8" font-size="22" fill="#363636" font-weight="normal" font-family='"Liberation Sans", sans-serif' text-anchor="start" textLength="87.62" lengthAdjust="spacingAndGlyphs" >Diagnose</text><rect x="2053.25" y="627.75" width="55.5" height="30.5" fill="#fff" stroke="#555555" stroke-width="1.4" rx="15.25" /><circle cx="2069" cy="643" r="10.8" fill="#333333" stroke="none" stroke-width="1"/><text x="1824.46" y="708.1" font-size="22" fill="#363636" font-weight="normal" font-family='"Liberation Sans", sans-serif' text-anchor="start" textLength="200.88" lengthAdjust="spacingAndGlyphs" >Allow native measure</text><text x="1823.60" y="740.6" font-size="22" fill="#363636" font-weight="normal" font-family='"Liberation Sans", sans-serif' text-anchor="start" textLength="181.65" lengthAdjust="spacingAndGlyphs" >editing in read view</text><rect x="2053.25" y="704.35" width="55.5" height="30.5" fill="#fff" stroke="#555555" stroke-width="1.4" rx="15.25" /><circle cx="2069" cy="719.6" r="10.8" fill="#333333" stroke="none" stroke-width="1"/><text x="1822.56" y="794.3" font-size="22" fill="#363636" font-weight="normal" font-family='"Liberation Sans", sans-serif' text-anchor="start" textLength="135.44" lengthAdjust="spacingAndGlyphs" >Increase scroll</text><text x="1824.19" y="826.8" font-size="22" fill="#363636" font-weight="normal" font-family='"Liberation Sans", sans-serif' text-anchor="start" textLength="85.96" lengthAdjust="spacingAndGlyphs" >thickness</text><rect x="2053.25" y="790.55" width="55.5" height="30.5" fill="#fff" stroke="#555555" stroke-width="1.4" rx="15.25" /><circle cx="2069" cy="805.8" r="10.8" fill="#333333" stroke="none" stroke-width="1"/><text x="1822.79" y="885.8" font-size="22" fill="#363636" font-weight="normal" font-family='"Liberation Sans", sans-serif' text-anchor="start" textLength="212.57" lengthAdjust="spacingAndGlyphs" >Hide pinned base rows</text><rect x="2053.25" y="865.75" width="55.5" height="30.5" fill="#fff" stroke="#555555" stroke-width="1.4" rx="15.25" /><circle cx="2069" cy="881" r="10.8" fill="#333333" stroke="none" stroke-width="1"/><text x="1821.90" y="951.5" font-size="22" fill="#363636" font-weight="normal" font-family='"Liberation Sans", sans-serif' text-anchor="start" textLength="92.22" lengthAdjust="spacingAndGlyphs" >Language</text><rect x="2053" y="922" width="217.5" height="44.5" fill="#fff" stroke="#dcdcdc" stroke-width="1.3" rx="0" /><text x="2070.05" y="952" font-size="22" fill="#363636" font-weight="normal" font-family='"Liberation Sans", sans-serif' text-anchor="start" textLength="70.14" lengthAdjust="spacingAndGlyphs" >English</text><path d="M2230.5 938 L2240.5 948.5 L2250.5 938" stroke="#323130" fill="none" stroke-width="1.4" /><text x="1821.90" y="1012.5" font-size="22" fill="#363636" font-weight="normal" font-family='"Liberation Sans", sans-serif' text-anchor="start" textLength="192.69" lengthAdjust="spacingAndGlyphs" >Populate Missing AC</text><text x="1823.51" y="1045" font-size="22" fill="#363636" font-weight="normal" font-family='"Liberation Sans", sans-serif' text-anchor="start" textLength="74.48" lengthAdjust="spacingAndGlyphs" >With FC</text><rect x="2052.5" y="1008" width="57" height="32" fill="#0a78d4" stroke="none" stroke-width="1" rx="16" /><circle cx="2092" cy="1024" r="10.8" fill="#f0f0f0" stroke="none" stroke-width="1"/><text x="1821.88" y="1104.8" font-size="22" fill="#363636" font-weight="normal" font-family='"Liberation Sans", sans-serif' text-anchor="start" textLength="119.87" lengthAdjust="spacingAndGlyphs" >Right To Left</text><rect x="2053.25" y="1084.75" width="55.5" height="30.5" fill="#fff" stroke="#555555" stroke-width="1.4" rx="15.25" /><circle cx="2069" cy="1100" r="10.8" fill="#333333" stroke="none" stroke-width="1"/><rect x="1812" y="982.5" width="309" height="79.5" fill="none" stroke="#000" stroke-width="5" rx="4" opacity="0.13" filter="url(#blr)"/><rect x="1810.4" y="980.7" width="312.3" height="83" fill="none" stroke="#d9262e" stroke-width="2" rx="4" /><text x="1820.77" y="1163.7" font-size="22" fill="#363636" font-weight="normal" font-family='"Liberation Sans", sans-serif' text-anchor="start" textLength="95.57" lengthAdjust="spacingAndGlyphs" stroke="#252423" stroke-width="0.55">Status Bar</text><path d="M1801 1146.7 L1810 1156.2 L1801 1165.7" stroke="#323130" fill="none" stroke-width="1.6" /><text x="1820.58" y="1218" font-size="22" fill="#363636" font-weight="normal" font-family='"Liberation Sans", sans-serif' text-anchor="start" textLength="194.65" lengthAdjust="spacingAndGlyphs" stroke="#252423" stroke-width="0.55">Cell / Row / Column</text><path d="M1801 1201 L1810 1210.5 L1801 1220" stroke="#323130" fill="none" stroke-width="1.6" /><text x="1819.97" y="1271.3" font-size="22" fill="#363636" font-weight="normal" font-family='"Liberation Sans", sans-serif' text-anchor="start" textLength="199.42" lengthAdjust="spacingAndGlyphs" stroke="#252423" stroke-width="0.55">Reading View Tooltip</text><path d="M1801 1254.3 L1810 1263.8 L1801 1273.3" stroke="#323130" fill="none" stroke-width="1.6" /><rect x="32" y="316.5" width="1019" height="503.5" fill="#fff" stroke="none" stroke-width="1" rx="0" /><rect x="32" y="380.5" width="1019" height="50.69999999999999" fill="#f4f4f4" stroke="none" stroke-width="1" rx="0" /><rect x="32" y="463.59999999999997" width="1019" height="32.4" fill="#f4f4f4" stroke="none" stroke-width="1" rx="0" /><line x1="32" y1="463.59999999999997" x2="1051" y2="463.59999999999997" stroke="#e6e6e6" stroke-width="1" /><line x1="32" y1="496.0" x2="1051" y2="496.0" stroke="#e6e6e6" stroke-width="1" /><rect x="32" y="528.4" width="1019" height="32.4" fill="#f4f4f4" stroke="none" stroke-width="1" rx="0" /><line x1="32" y1="528.4" x2="1051" y2="528.4" stroke="#e6e6e6" stroke-width="1" /><line x1="32" y1="560.8" x2="1051" y2="560.8" stroke="#e6e6e6" stroke-width="1" /><rect x="32" y="593.2" width="1019" height="32.4" fill="#f4f4f4" stroke="none" stroke-width="1" rx="0" /><line x1="32" y1="593.2" x2="1051" y2="593.2" stroke="#e6e6e6" stroke-width="1" /><line x1="32" y1="625.5999999999999" x2="1051" y2="625.5999999999999" stroke="#e6e6e6" stroke-width="1" /><rect x="32" y="658.0" width="1019" height="32.4" fill="#f4f4f4" stroke="none" stroke-width="1" rx="0" /><line x1="32" y1="658.0" x2="1051" y2="658.0" stroke="#e6e6e6" stroke-width="1" /><line x1="32" y1="690.4" x2="1051" y2="690.4" stroke="#e6e6e6" stroke-width="1" /><rect x="32" y="722.8" width="1019" height="32.4" fill="#f4f4f4" stroke="none" stroke-width="1" rx="0" /><line x1="32" y1="722.8" x2="1051" y2="722.8" stroke="#e6e6e6" stroke-width="1" /><line x1="32" y1="755.2" x2="1051" y2="755.2" stroke="#e6e6e6" stroke-width="1" /><rect x="32" y="787.5999999999999" width="1019" height="32.4" fill="#f4f4f4" stroke="none" stroke-width="1" rx="0" /><line x1="32" y1="787.5999999999999" x2="1051" y2="787.5999999999999" stroke="#e6e6e6" stroke-width="1" /><line x1="442" y1="316.5" x2="442" y2="820" stroke="#e3e3e3" stroke-width="1" /><line x1="629.5" y1="316.5" x2="629.5" y2="820" stroke="#e3e3e3" stroke-width="1" /><line x1="849.5" y1="316.5" x2="849.5" y2="820" stroke="#e3e3e3" stroke-width="1" /><rect x="32.5" y="316.5" width="1018" height="503.5" fill="none" stroke="#e0e0e0" stroke-width="1" rx="0" /><line x1="247.5" y1="316.5" x2="247.5" y2="820" stroke="#9c9c9c" stroke-width="1.6" /><line x1="32" y1="380.5" x2="1051" y2="380.5" stroke="#b4b4b4" stroke-width="1.8" /><line x1="32" y1="820" x2="1051" y2="820" stroke="#b4b4b4" stroke-width="1.8" /><text x="37.22" y="356.5" font-size="22" fill="#363636" font-weight="normal" font-family='"Liberation Sans", sans-serif' text-anchor="start" textLength="124.14" lengthAdjust="spacingAndGlyphs" >Month Name</text><text x="264.78" y="356.5" font-size="22" fill="#363636" font-weight="normal" font-family='"Liberation Sans", sans-serif' text-anchor="start" textLength="171.96" lengthAdjust="spacingAndGlyphs" >Sum of 2023 Sales</text><text x="459.36" y="356.5" font-size="22" fill="#363636" font-weight="normal" font-family='"Liberation Sans", sans-serif' text-anchor="start" textLength="164.48" lengthAdjust="spacingAndGlyphs" >Sum of 2024 Plan</text><text x="641.37" y="356.5" font-size="22" fill="#363636" font-weight="normal" font-family='"Liberation Sans", sans-serif' text-anchor="start" textLength="201.78" lengthAdjust="spacingAndGlyphs" >Sum of 2024 Forecast</text><text x="874.68" y="356.5" font-size="22" fill="#363636" font-weight="normal" font-family='"Liberation Sans", sans-serif' text-anchor="start" textLength="170.85" lengthAdjust="spacingAndGlyphs" >Sum of 2024 Sales</text><text x="38.21" y="414" font-size="21" fill="#111" font-weight="bold" font-family='"Liberation Sans", sans-serif' text-anchor="start" textLength="27.94" lengthAdjust="spacingAndGlyphs" >All</text><text x="432.40" y="413.8" font-size="22" fill="#111" font-weight="bold" font-family='"Liberation Mono", monospace' text-anchor="end" textLength="92.40" lengthAdjust="spacingAndGlyphs">1,955.00</text><text x="619.90" y="413.8" font-size="22" fill="#111" font-weight="bold" font-family='"Liberation Mono", monospace' text-anchor="end" textLength="92.40" lengthAdjust="spacingAndGlyphs">2,027.00</text><text x="840.00" y="413.8" font-size="22" fill="#111" font-weight="bold" font-family='"Liberation Mono", monospace' text-anchor="end" textLength="92.40" lengthAdjust="spacingAndGlyphs">2,037.00</text><text x="1041.50" y="413.8" font-size="22" fill="#111" font-weight="bold" font-family='"Liberation Mono", monospace' text-anchor="end" textLength="92.40" lengthAdjust="spacingAndGlyphs">1,458.00</text><text x="38.41" y="455.0" font-size="22" fill="#363636" font-weight="normal" font-family='"Liberation Sans", sans-serif' text-anchor="start" textLength="30.21" lengthAdjust="spacingAndGlyphs" >Jan</text><text x="432.40" y="455.0" font-size="22" fill="#363636" font-weight="normal" font-family='"Liberation Mono", monospace' text-anchor="end" textLength="69.30" lengthAdjust="spacingAndGlyphs">115.00</text><text x="619.90" y="455.0" font-size="22" fill="#363636" font-weight="normal" font-family='"Liberation Mono", monospace' text-anchor="end" textLength="69.30" lengthAdjust="spacingAndGlyphs">130.00</text><text x="840.00" y="455.0" font-size="22" fill="#363636" font-weight="normal" font-family='"Liberation Mono", monospace' text-anchor="end" textLength="69.30" lengthAdjust="spacingAndGlyphs">128.00</text><text x="1041.50" y="455.0" font-size="22" fill="#363636" font-weight="normal" font-family='"Liberation Mono", monospace' text-anchor="end" textLength="69.30" lengthAdjust="spacingAndGlyphs">128.00</text><text x="37.02" y="487.4" font-size="22" fill="#363636" font-weight="normal" font-family='"Liberation Sans", sans-serif' text-anchor="start" textLength="35.24" lengthAdjust="spacingAndGlyphs" >Feb</text><text x="432.40" y="487.4" font-size="22" fill="#363636" font-weight="normal" font-family='"Liberation Mono", monospace' text-anchor="end" textLength="69.30" lengthAdjust="spacingAndGlyphs">134.00</text><text x="619.90" y="487.4" font-size="22" fill="#363636" font-weight="normal" font-family='"Liberation Mono", monospace' text-anchor="end" textLength="69.30" lengthAdjust="spacingAndGlyphs">145.00</text><text x="840.00" y="487.4" font-size="22" fill="#363636" font-weight="normal" font-family='"Liberation Mono", monospace' text-anchor="end" textLength="69.30" lengthAdjust="spacingAndGlyphs">147.00</text><text x="1041.50" y="487.4" font-size="22" fill="#363636" font-weight="normal" font-family='"Liberation Mono", monospace' text-anchor="end" textLength="69.30" lengthAdjust="spacingAndGlyphs">147.00</text><text x="36.85" y="519.8" font-size="22" fill="#363636" font-weight="normal" font-family='"Liberation Sans", sans-serif' text-anchor="start" textLength="38.93" lengthAdjust="spacingAndGlyphs" >Mar</text><text x="432.40" y="519.8" font-size="22" fill="#363636" font-weight="normal" font-family='"Liberation Mono", monospace' text-anchor="end" textLength="69.30" lengthAdjust="spacingAndGlyphs">141.00</text><text x="619.90" y="519.8" font-size="22" fill="#363636" font-weight="normal" font-family='"Liberation Mono", monospace' text-anchor="end" textLength="69.30" lengthAdjust="spacingAndGlyphs">141.00</text><text x="840.00" y="519.8" font-size="22" fill="#363636" font-weight="normal" font-family='"Liberation Mono", monospace' text-anchor="end" textLength="69.30" lengthAdjust="spacingAndGlyphs">136.00</text><text x="1041.50" y="519.8" font-size="22" fill="#363636" font-weight="normal" font-family='"Liberation Mono", monospace' text-anchor="end" textLength="69.30" lengthAdjust="spacingAndGlyphs">136.00</text><text x="38.66" y="552.1999999999999" font-size="22" fill="#363636" font-weight="normal" font-family='"Liberation Sans", sans-serif' text-anchor="start" textLength="33.09" lengthAdjust="spacingAndGlyphs" >Apr</text><text x="432.40" y="552.1999999999999" font-size="22" fill="#363636" font-weight="normal" font-family='"Liberation Mono", monospace' text-anchor="end" textLength="69.30" lengthAdjust="spacingAndGlyphs">152.00</text><text x="619.90" y="552.1999999999999" font-size="22" fill="#363636" font-weight="normal" font-family='"Liberation Mono", monospace' text-anchor="end" textLength="69.30" lengthAdjust="spacingAndGlyphs">143.00</text><text x="840.00" y="552.1999999999999" font-size="22" fill="#363636" font-weight="normal" font-family='"Liberation Mono", monospace' text-anchor="end" textLength="69.30" lengthAdjust="spacingAndGlyphs">139.00</text><text x="1041.50" y="552.1999999999999" font-size="22" fill="#363636" font-weight="normal" font-family='"Liberation Mono", monospace' text-anchor="end" textLength="69.30" lengthAdjust="spacingAndGlyphs">139.00</text><text x="36.94" y="584.5999999999999" font-size="22" fill="#363636" font-weight="normal" font-family='"Liberation Sans", sans-serif' text-anchor="start" textLength="40.61" lengthAdjust="spacingAndGlyphs" >May</text><text x="432.40" y="584.5999999999999" font-size="22" fill="#363636" font-weight="normal" font-family='"Liberation Mono", monospace' text-anchor="end" textLength="69.30" lengthAdjust="spacingAndGlyphs">174.00</text><text x="619.90" y="584.5999999999999" font-size="22" fill="#363636" font-weight="normal" font-family='"Liberation Mono", monospace' text-anchor="end" textLength="69.30" lengthAdjust="spacingAndGlyphs">171.00</text><text x="840.00" y="584.5999999999999" font-size="22" fill="#363636" font-weight="normal" font-family='"Liberation Mono", monospace' text-anchor="end" textLength="69.30" lengthAdjust="spacingAndGlyphs">170.00</text><text x="1041.50" y="584.5999999999999" font-size="22" fill="#363636" font-weight="normal" font-family='"Liberation Mono", monospace' text-anchor="end" textLength="69.30" lengthAdjust="spacingAndGlyphs">170.00</text><text x="38.40" y="617.0" font-size="22" fill="#363636" font-weight="normal" font-family='"Liberation Sans", sans-serif' text-anchor="start" textLength="31.16" lengthAdjust="spacingAndGlyphs" >Jun</text><text x="432.40" y="617.0" font-size="22" fill="#363636" font-weight="normal" font-family='"Liberation Mono", monospace' text-anchor="end" textLength="69.30" lengthAdjust="spacingAndGlyphs">183.00</text><text x="619.90" y="617.0" font-size="22" fill="#363636" font-weight="normal" font-family='"Liberation Mono", monospace' text-anchor="end" textLength="69.30" lengthAdjust="spacingAndGlyphs">190.00</text><text x="840.00" y="617.0" font-size="22" fill="#363636" font-weight="normal" font-family='"Liberation Mono", monospace' text-anchor="end" textLength="69.30" lengthAdjust="spacingAndGlyphs">193.00</text><text x="1041.50" y="617.0" font-size="22" fill="#363636" font-weight="normal" font-family='"Liberation Mono", monospace' text-anchor="end" textLength="69.30" lengthAdjust="spacingAndGlyphs">193.00</text><text x="38.39" y="649.3999999999999" font-size="22" fill="#363636" font-weight="normal" font-family='"Liberation Sans", sans-serif' text-anchor="start" textLength="25.12" lengthAdjust="spacingAndGlyphs" >Jul</text><text x="432.40" y="649.3999999999999" font-size="22" fill="#363636" font-weight="normal" font-family='"Liberation Mono", monospace' text-anchor="end" textLength="69.30" lengthAdjust="spacingAndGlyphs">152.00</text><text x="619.90" y="649.3999999999999" font-size="22" fill="#363636" font-weight="normal" font-family='"Liberation Mono", monospace' text-anchor="end" textLength="69.30" lengthAdjust="spacingAndGlyphs">171.00</text><text x="840.00" y="649.3999999999999" font-size="22" fill="#363636" font-weight="normal" font-family='"Liberation Mono", monospace' text-anchor="end" textLength="69.30" lengthAdjust="spacingAndGlyphs">178.00</text><text x="1041.50" y="649.3999999999999" font-size="22" fill="#363636" font-weight="normal" font-family='"Liberation Mono", monospace' text-anchor="end" textLength="69.30" lengthAdjust="spacingAndGlyphs">178.00</text><text x="38.66" y="681.8" font-size="22" fill="#363636" font-weight="normal" font-family='"Liberation Sans", sans-serif' text-anchor="start" textLength="36.25" lengthAdjust="spacingAndGlyphs" >Aug</text><text x="432.40" y="681.8" font-size="22" fill="#363636" font-weight="normal" font-family='"Liberation Mono", monospace' text-anchor="end" textLength="69.30" lengthAdjust="spacingAndGlyphs">164.00</text><text x="619.90" y="681.8" font-size="22" fill="#363636" font-weight="normal" font-family='"Liberation Mono", monospace' text-anchor="end" textLength="69.30" lengthAdjust="spacingAndGlyphs">191.00</text><text x="840.00" y="681.8" font-size="22" fill="#363636" font-weight="normal" font-family='"Liberation Mono", monospace' text-anchor="end" textLength="69.30" lengthAdjust="spacingAndGlyphs">189.00</text><text x="1041.50" y="681.8" font-size="22" fill="#363636" font-weight="normal" font-family='"Liberation Mono", monospace' text-anchor="end" textLength="69.30" lengthAdjust="spacingAndGlyphs">189.00</text><text x="37.82" y="714.1999999999999" font-size="22" fill="#363636" font-weight="normal" font-family='"Liberation Sans", sans-serif' text-anchor="start" textLength="34.39" lengthAdjust="spacingAndGlyphs" >Sep</text><text x="432.40" y="714.1999999999999" font-size="22" fill="#363636" font-weight="normal" font-family='"Liberation Mono", monospace' text-anchor="end" textLength="69.30" lengthAdjust="spacingAndGlyphs">172.00</text><text x="619.90" y="714.1999999999999" font-size="22" fill="#363636" font-weight="normal" font-family='"Liberation Mono", monospace' text-anchor="end" textLength="69.30" lengthAdjust="spacingAndGlyphs">177.00</text><text x="840.00" y="714.1999999999999" font-size="22" fill="#363636" font-weight="normal" font-family='"Liberation Mono", monospace' text-anchor="end" textLength="69.30" lengthAdjust="spacingAndGlyphs">178.00</text><text x="1041.50" y="714.1999999999999" font-size="22" fill="#363636" font-weight="normal" font-family='"Liberation Mono", monospace' text-anchor="end" textLength="69.30" lengthAdjust="spacingAndGlyphs">178.00</text><text x="37.64" y="746.5999999999999" font-size="22" fill="#363636" font-weight="normal" font-family='"Liberation Sans", sans-serif' text-anchor="start" textLength="34.82" lengthAdjust="spacingAndGlyphs" >Oct</text><text x="432.40" y="746.5999999999999" font-size="22" fill="#363636" font-weight="normal" font-family='"Liberation Mono", monospace' text-anchor="end" textLength="69.30" lengthAdjust="spacingAndGlyphs">184.00</text><text x="619.90" y="746.5999999999999" font-size="22" fill="#363636" font-weight="normal" font-family='"Liberation Mono", monospace' text-anchor="end" textLength="69.30" lengthAdjust="spacingAndGlyphs">184.00</text><text x="840.00" y="746.5999999999999" font-size="22" fill="#363636" font-weight="normal" font-family='"Liberation Mono", monospace' text-anchor="end" textLength="69.30" lengthAdjust="spacingAndGlyphs">179.00</text><text x="1041.50" y="746.5999999999999" font-size="22" fill="#363636" font-weight="normal" font-family='"Liberation Mono", monospace' text-anchor="end" textLength="69.30" lengthAdjust="spacingAndGlyphs">179.00</text><text x="36.92" y="779.0" font-size="22" fill="#363636" font-weight="normal" font-family='"Liberation Sans", sans-serif' text-anchor="start" textLength="38.55" lengthAdjust="spacingAndGlyphs" >Nov</text><text x="432.40" y="779.0" font-size="22" fill="#363636" font-weight="normal" font-family='"Liberation Mono", monospace' text-anchor="end" textLength="69.30" lengthAdjust="spacingAndGlyphs">201.00</text><text x="619.90" y="779.0" font-size="22" fill="#363636" font-weight="normal" font-family='"Liberation Mono", monospace' text-anchor="end" textLength="69.30" lengthAdjust="spacingAndGlyphs">194.00</text><text x="840.00" y="779.0" font-size="22" fill="#363636" font-weight="normal" font-family='"Liberation Mono", monospace' text-anchor="end" textLength="69.30" lengthAdjust="spacingAndGlyphs">189.00</text><text x="1041.50" y="779.0" font-size="22" fill="#363636" font-weight="normal" font-family='"Liberation Mono", monospace' text-anchor="end" textLength="69.30" lengthAdjust="spacingAndGlyphs">189.00</text><text x="36.97" y="811.3999999999999" font-size="22" fill="#363636" font-weight="normal" font-family='"Liberation Sans", sans-serif' text-anchor="start" textLength="37.48" lengthAdjust="spacingAndGlyphs" >Dec</text><text x="432.40" y="811.3999999999999" font-size="22" fill="#363636" font-weight="normal" font-family='"Liberation Mono", monospace' text-anchor="end" textLength="69.30" lengthAdjust="spacingAndGlyphs">183.00</text><text x="619.90" y="811.3999999999999" font-size="22" fill="#363636" font-weight="normal" font-family='"Liberation Mono", monospace' text-anchor="end" textLength="69.30" lengthAdjust="spacingAndGlyphs">190.00</text><text x="840.00" y="811.3999999999999" font-size="22" fill="#363636" font-weight="normal" font-family='"Liberation Mono", monospace' text-anchor="end" textLength="69.30" lengthAdjust="spacingAndGlyphs">211.00</text><text x="1041.50" y="811.3999999999999" font-size="22" fill="#363636" font-weight="normal" font-family='"Liberation Mono", monospace' text-anchor="end" textLength="69.30" lengthAdjust="spacingAndGlyphs">211.00</text><rect x="680" y="721.5" width="167" height="101" fill="none" stroke="#000" stroke-width="5" rx="5" opacity="0.13" filter="url(#blr)"/><rect x="678.5" y="719.8" width="169.8" height="104.3" fill="none" stroke="#1fa8dd" stroke-width="3.6" rx="6" /><rect x="867.5" y="721" width="187.3" height="104.8" fill="none" stroke="#000" stroke-width="5" rx="5" opacity="0.13" filter="url(#blr)"/><rect x="866" y="719.5" width="190.3" height="107.8" fill="none" stroke="#d42a2a" stroke-width="2" rx="5" /><line x1="6" y1="1234.5" x2="1766" y2="1234.5" stroke="#e1e1e1" stroke-width="1.5" /><text x="6.43" y="1266" font-size="22" fill="#363636" font-weight="normal" font-family='"Liberation Sans", sans-serif' text-anchor="start" textLength="131.69" lengthAdjust="spacingAndGlyphs" >Total rows: 13</text><path d="M1162.96 1257.05 L1166.37 1257.41 L1166.37 1261.19 L1162.96 1261.55 L1161.54 1264.96 L1163.70 1267.63 L1161.03 1270.30 L1158.36 1268.14 L1154.95 1269.56 L1154.59 1272.97 L1150.81 1272.97 L1150.45 1269.56 L1147.04 1268.14 L1144.37 1270.30 L1141.70 1267.63 L1143.86 1264.96 L1142.44 1261.55 L1139.03 1261.19 L1139.03 1257.41 L1142.44 1257.05 L1143.86 1253.64 L1141.70 1250.97 L1144.37 1248.30 L1147.04 1250.46 L1150.45 1249.04 L1150.81 1245.63 L1154.59 1245.63 L1154.95 1249.04 L1158.36 1250.46 L1161.03 1248.30 L1163.70 1250.97 L1161.54 1253.64 Z" stroke="#444" fill="none" stroke-width="1.6" stroke-linejoin="round"/><circle cx="1152.7" cy="1259.3" r="5.5" fill="none" stroke="#1f5aa6" stroke-width="1.6"/><line x1="1188" y1="1260.8" x2="1205" y2="1260.8" stroke="#323130" stroke-width="2" /><rect x="1221.5" y="1246" width="96.5" height="34" fill="#fff" stroke="#a8a8a8" stroke-width="1.4" rx="0" /><rect x="1143" y="1286.5" width="15.5" height="1.5" fill="#666" stroke="none" stroke-width="1" rx="0" /><text x="1277.45" y="1270.2" font-size="21" fill="#363636" font-family='"Liberation Mono", monospace' text-anchor="end" textLength="33" lengthAdjust="spacingAndGlyphs">100</text><text x="1281.34" y="1270.2" font-size="22" fill="#363636" font-weight="normal" font-family='"Liberation Sans", sans-serif' text-anchor="start" textLength="16.42" lengthAdjust="spacingAndGlyphs" >%</text><line x1="1330" y1="1263" x2="1348.6" y2="1263" stroke="#323130" stroke-width="2" /><line x1="1339.3" y1="1254" x2="1339.3" y2="1271" stroke="#323130" stroke-width="2" /><text x="1398.71" y="1265.5" font-size="22" fill="#363636" font-weight="normal" font-family='"Liberation Sans", sans-serif' text-anchor="start" textLength="98.64" lengthAdjust="spacingAndGlyphs" >13 records</text><line x1="1520" y1="1250.5" x2="1520" y2="1267" stroke="#a0a0a0" stroke-width="2.8" /><path d="M1536 1251.5 L1527.5 1258.8 L1536 1266" stroke="#a0a0a0" fill="none" stroke-width="2.8" /><path d="M1558 1251.5 L1549.5 1258.8 L1558 1266" stroke="#a0a0a0" fill="none" stroke-width="2.8" /><text x="1568.77" y="1265.5" font-size="22" fill="#363636" font-weight="normal" font-family='"Liberation Sans", sans-serif' text-anchor="start" textLength="107.65" lengthAdjust="spacingAndGlyphs" >Page 1 of 1</text><path d="M1688 1251.5 L1696.5 1258.8 L1688 1266" stroke="#a0a0a0" fill="none" stroke-width="2.8" /><path d="M1710 1251.5 L1718.5 1258.8 L1710 1266" stroke="#a0a0a0" fill="none" stroke-width="2.8" /><line x1="1726" y1="1250.5" x2="1726" y2="1267" stroke="#a0a0a0" stroke-width="2.8" /><rect x="0" y="634" width="1.5" height="15.7" fill="#999" stroke="none" stroke-width="1" rx="0" /><rect x="2300.6" y="634" width="3.4" height="15.7" fill="#999" stroke="none" stroke-width="1" rx="0" /><rect x="0" y="1279" width="1.5" height="9" fill="#999" stroke="none" stroke-width="1" rx="0" /><rect x="0" y="1286.5" width="9" height="1.5" fill="#999" stroke="none" stroke-width="1" rx="0" /><rect x="0" y="0" width="1.5" height="5" fill="#666" stroke="none" stroke-width="1" rx="0" /></svg>
</body></html>
